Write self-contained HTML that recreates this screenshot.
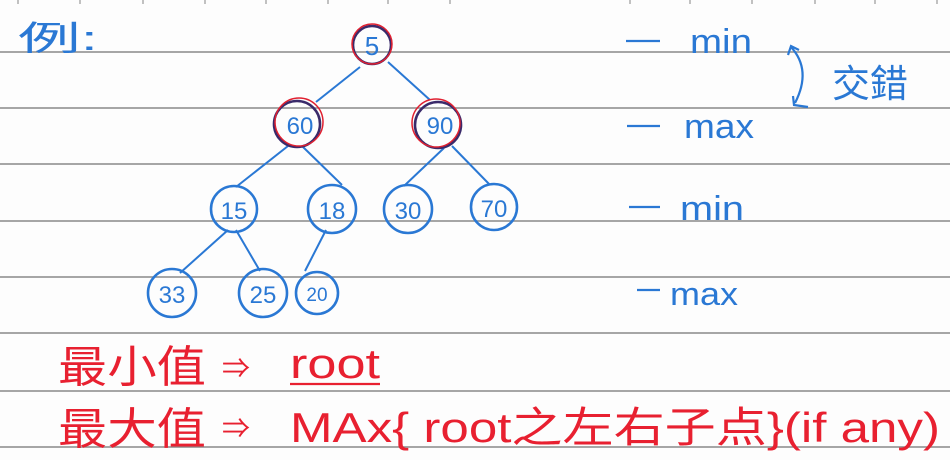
<!DOCTYPE html>
<html><head><meta charset="utf-8"><style>
html,body{margin:0;padding:0;background:#fff;width:950px;height:460px;overflow:hidden}
text{font-family:"Liberation Sans","Noto Sans CJK TC",sans-serif}
</style></head><body>
<svg width="950" height="460" viewBox="0 0 950 460" xmlns="http://www.w3.org/2000/svg">
<rect width="950" height="460" fill="#fdfdfd"/>
<g stroke="#8a8a8a" stroke-width="1.5">
<line x1="0" y1="52" x2="950" y2="52"/>
<line x1="0" y1="108" x2="950" y2="108"/>
<line x1="0" y1="164" x2="950" y2="164"/>
<line x1="0" y1="221" x2="950" y2="221"/>
<line x1="0" y1="277" x2="950" y2="277"/>
<line x1="0" y1="333" x2="950" y2="333"/>
<line x1="0" y1="391" x2="950" y2="391"/>
<line x1="0" y1="447" x2="950" y2="447"/>
</g>
<g stroke="#999" stroke-width="1.2">
<line x1="18" y1="0" x2="18" y2="4"/><line x1="80" y1="0" x2="80" y2="4"/><line x1="143" y1="0" x2="143" y2="4"/><line x1="205" y1="0" x2="205" y2="4"/><line x1="266" y1="0" x2="266" y2="4"/><line x1="328" y1="0" x2="328" y2="4"/><line x1="388" y1="0" x2="388" y2="4"/><line x1="450" y1="0" x2="450" y2="4"/><line x1="630" y1="0" x2="630" y2="4"/><line x1="690" y1="0" x2="690" y2="4"/><line x1="752" y1="0" x2="752" y2="4"/><line x1="815" y1="0" x2="815" y2="4"/><line x1="875" y1="0" x2="875" y2="4"/><line x1="937" y1="0" x2="937" y2="4"/>
</g>
<g stroke="#2a78d4" stroke-width="2" fill="none">
<line x1="360" y1="67" x2="316" y2="102"/>
<line x1="388" y1="62" x2="430" y2="100"/>
<line x1="288" y1="146" x2="236" y2="187"/>
<line x1="302" y1="146" x2="342" y2="185"/>
<line x1="444" y1="148" x2="404" y2="186"/>
<line x1="452" y1="146" x2="490" y2="185"/>
<line x1="228" y1="230" x2="180" y2="273"/>
<line x1="236" y1="230" x2="260" y2="271"/>
<line x1="326" y1="230" x2="305" y2="271"/>
</g>
<g fill="none" stroke-width="2.6">
<circle cx="372" cy="45" r="19" stroke="#3a2a6a"/>
<circle cx="372" cy="44" r="20" stroke="#e02030" stroke-width="1.5"/>
<circle cx="297" cy="124" r="23" stroke="#3a2a6a"/>
<circle cx="299" cy="122" r="24" stroke="#e02030" stroke-width="1.5"/>
<circle cx="438" cy="125" r="23" stroke="#3a2a6a"/>
<circle cx="436" cy="123" r="24" stroke="#e02030" stroke-width="1.5"/>
<g stroke="#2a78d4">
<circle cx="234" cy="209" r="23"/>
<circle cx="332" cy="209" r="24"/>
<circle cx="408" cy="209" r="24"/>
<circle cx="494" cy="207" r="23"/>
<circle cx="172" cy="293" r="24"/>
<circle cx="263" cy="293" r="24"/>
<circle cx="317" cy="293" r="21"/>
</g>
</g>
<g fill="#2a78d4" font-size="26" text-anchor="middle">
<text x="372" y="55">5</text>
<text x="300" y="134" font-size="24">60</text>
<text x="440" y="134" font-size="24">90</text>
<text x="234" y="219" font-size="24">15</text>
<text x="332" y="219" font-size="24">18</text>
<text x="408" y="219" font-size="24">30</text>
<text x="494" y="217" font-size="24">70</text>
<text x="172" y="303" font-size="24">33</text>
<text x="263" y="303" font-size="24">25</text>
<text x="317" y="301" font-size="19">20</text>
<text x="18" y="50" font-size="34" text-anchor="start" textLength="80" lengthAdjust="spacingAndGlyphs">例:</text>
<text x="690" y="53" font-size="34" text-anchor="start" textLength="62" lengthAdjust="spacingAndGlyphs">min</text>
<text x="684" y="138" font-size="34" text-anchor="start" textLength="70" lengthAdjust="spacingAndGlyphs">max</text>
<text x="680" y="220" font-size="34" text-anchor="start" textLength="64" lengthAdjust="spacingAndGlyphs">min</text>
<text x="670" y="305" font-size="32" text-anchor="start" textLength="68" lengthAdjust="spacingAndGlyphs">max</text>
<text x="832" y="97" font-size="38" text-anchor="start" textLength="76" lengthAdjust="spacingAndGlyphs">交錯</text>
</g>
<g stroke="#2a78d4" stroke-width="2.2" fill="none">
<line x1="626" y1="41" x2="660" y2="41"/>
<line x1="627" y1="126" x2="660" y2="126"/>
<line x1="629" y1="207" x2="660" y2="207"/>
<line x1="637" y1="290" x2="660" y2="290"/>
<path d="M791 47 Q812 70 795 103"/>
<path d="M788 55 L791 46 L799 50"/>
<path d="M793 96 L794 105 L808 107"/>
</g>
<g fill="#e82030">
<text x="58" y="382" font-size="44" textLength="148" lengthAdjust="spacingAndGlyphs">最小值</text>
<text x="222" y="378" font-size="28">⇒</text>
<text x="290" y="378" font-size="42" textLength="90" lengthAdjust="spacingAndGlyphs">root</text>
<text x="58" y="444" font-size="44" textLength="148" lengthAdjust="spacingAndGlyphs">最大值</text>
<text x="222" y="438" font-size="28">⇒</text>
<text x="290" y="442" font-size="42" textLength="650" lengthAdjust="spacingAndGlyphs">MAx{ root之左右子点}(if any)</text>
</g>
<line x1="290" y1="384" x2="380" y2="384" stroke="#e82030" stroke-width="2.2"/>
</svg>
</body></html>
